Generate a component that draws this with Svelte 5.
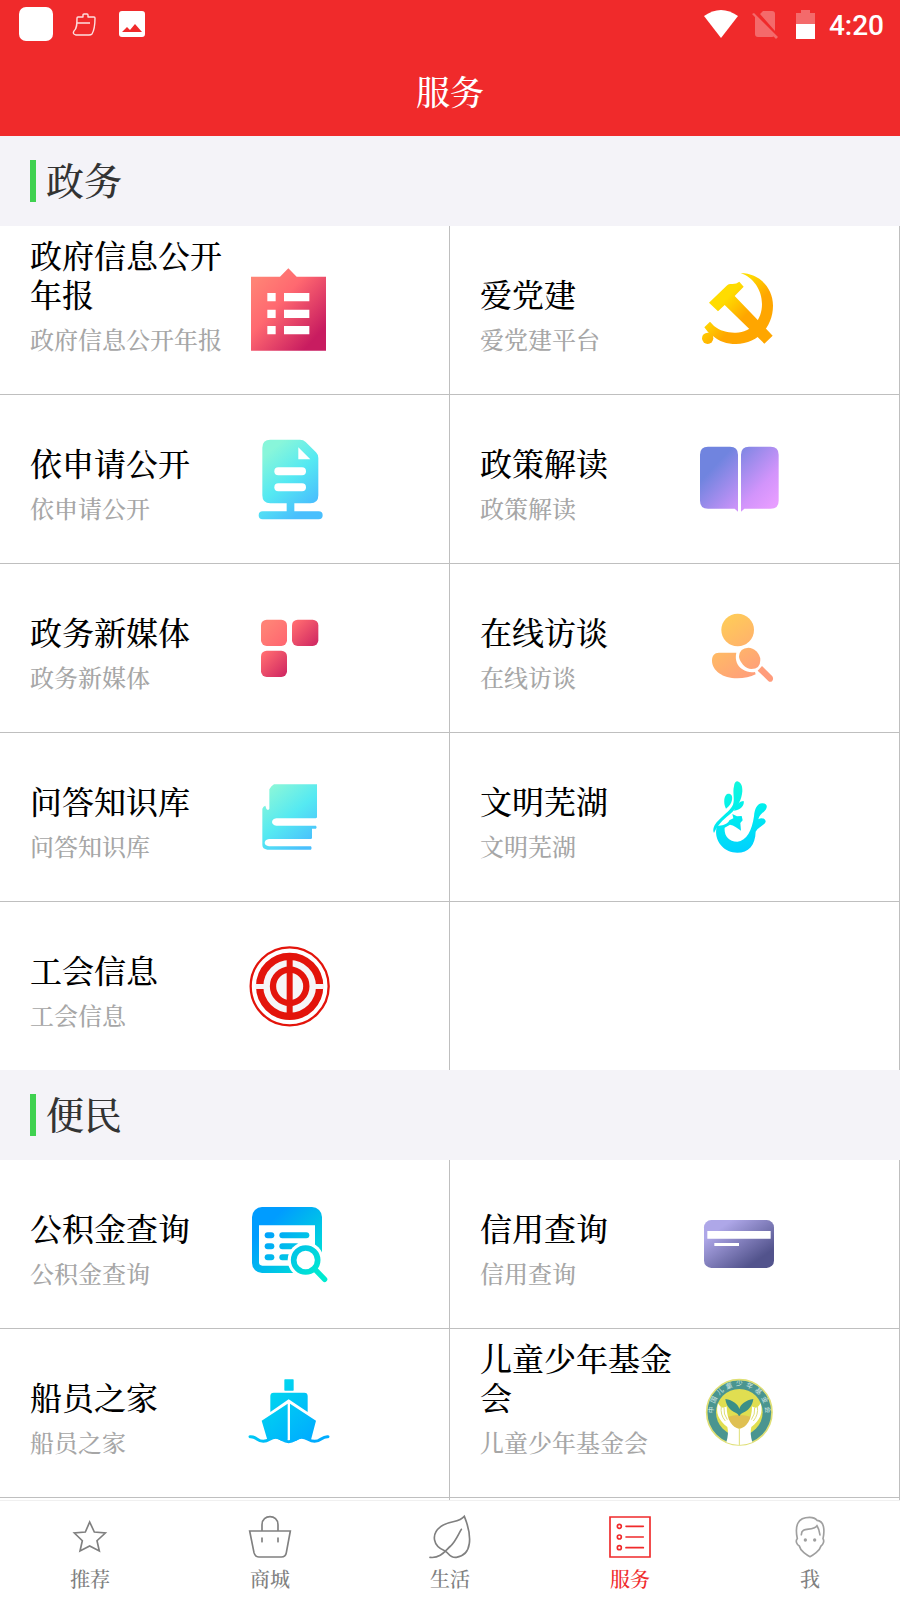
<script lang="ts">
  interface Service {
    title: string;
    desc: string;
    icon: string;
  }

  interface Section {
    name: string;
    items: (Service | null)[];
  }

  const sections: Section[] = [
    {
      name: '政务',
      items: [
        { title: '政府信息公开年报', desc: '政府信息公开年报', icon: 'report' },
        { title: '爱党建', desc: '爱党建平台', icon: 'party' },
        { title: '依申请公开', desc: '依申请公开', icon: 'document' },
        { title: '政策解读', desc: '政策解读', icon: 'book' },
        { title: '政务新媒体', desc: '政务新媒体', icon: 'tiles' },
        { title: '在线访谈', desc: '在线访谈', icon: 'interview' },
        { title: '问答知识库', desc: '问答知识库', icon: 'library' },
        { title: '文明芜湖', desc: '文明芜湖', icon: 'splash' },
        { title: '工会信息', desc: '工会信息', icon: 'union' },
        null,
      ],
    },
    {
      name: '便民',
      items: [
        { title: '公积金查询', desc: '公积金查询', icon: 'fund' },
        { title: '信用查询', desc: '信用查询', icon: 'card' },
        { title: '船员之家', desc: '船员之家', icon: 'ship' },
        { title: '儿童少年基金会', desc: '儿童少年基金会', icon: 'children' },
        null,
        null,
      ],
    },
  ];

  const tabs = [
    { label: '推荐', icon: 'star' },
    { label: '商城', icon: 'bag' },
    { label: '生活', icon: 'leaf' },
    { label: '服务', icon: 'list' },
    { label: '我', icon: 'me' },
  ];

  let activeTab = $state('服务');
</script>

<!-- Gradients shared by the service icons -->
<svg class="defs" aria-hidden="true">
  <defs>
    <linearGradient id="rose" x1="0" y1="0" x2="1" y2="1">
      <stop offset="0.1" stop-color="#ff8375" />
      <stop offset="0.4" stop-color="#ff6870" />
      <stop offset="0.85" stop-color="#c81c60" />
    </linearGradient>
    <linearGradient id="peach" x1="0" y1="0" x2="1" y2="1">
      <stop offset="0.2" stop-color="#ff8276" />
      <stop offset="1" stop-color="#ff6470" />
    </linearGradient>
    <linearGradient id="crimson" x1="0" y1="0" x2="1" y2="1">
      <stop offset="0.1" stop-color="#ff6a70" />
      <stop offset="1" stop-color="#cd2461" />
    </linearGradient>
    <linearGradient id="gold" gradientUnits="userSpaceOnUse" x1="60" y1="60" x2="170" y2="170">
      <stop offset="0.2" stop-color="#ffdc00" />
      <stop offset="0.7" stop-color="#ffa600" />
    </linearGradient>
    <linearGradient id="aqua" gradientUnits="userSpaceOnUse" x1="40" y1="20" x2="200" y2="215">
      <stop offset="0.1" stop-color="#88f6da" />
      <stop offset="0.5" stop-color="#55e9f2" />
      <stop offset="0.9" stop-color="#49bffd" />
    </linearGradient>
    <linearGradient id="violet" gradientUnits="userSpaceOnUse" x1="20" y1="30" x2="210" y2="210">
      <stop offset="0.2" stop-color="#7084df" />
      <stop offset="0.75" stop-color="#d294fb" />
      <stop offset="1" stop-color="#e79dff" />
    </linearGradient>
    <linearGradient id="amber" gradientUnits="userSpaceOnUse" x1="70" y1="30" x2="180" y2="200">
      <stop offset="0" stop-color="#ffcc58" />
      <stop offset="1" stop-color="#ff9c7c" />
    </linearGradient>
    <linearGradient id="water" gradientUnits="userSpaceOnUse" x1="90" y1="15" x2="140" y2="225">
      <stop offset="0" stop-color="#12f8dc" />
      <stop offset="0.4" stop-color="#00f0ec" />
      <stop offset="1" stop-color="#00d0ff" />
    </linearGradient>
    <linearGradient id="query" gradientUnits="userSpaceOnUse" x1="20" y1="40" x2="200" y2="220">
      <stop offset="0.15" stop-color="#009cff" />
      <stop offset="1" stop-color="#00ead0" />
    </linearGradient>
    <linearGradient id="slate" x1="0" y1="0" x2="1" y2="1">
      <stop offset="0.2" stop-color="#aea7e8" />
      <stop offset="0.8" stop-color="#52538c" />
    </linearGradient>
    <linearGradient id="sea" gradientUnits="userSpaceOnUse" x1="50" y1="50" x2="180" y2="200">
      <stop offset="0" stop-color="#00d8ee" />
      <stop offset="1" stop-color="#00acff" />
    </linearGradient>
  </defs>
</svg>

{#snippet serviceIcon(name: string)}
  <svg class="service-icon" viewBox="0 0 240 240" aria-hidden="true">
    {#if name === 'report'}
      <path fill="url(#rose)" d="M3 20H90L115-5L140 20H228V242H3Z" />
      <path fill="#fff" d="M52 69h25v25H52zM102 69h76v25h-76zM52 119h25v25H52zM102 119h76v25h-76zM52 168h25v25H52zM102 168h76v25h-76z" />
    {:else if name === 'party'}
      <g fill="url(#gold)">
        <path d="M27 98L80 47Q85 41 92 42Q108 44 118 35L131 50L104 78L218 197L193 221L74 105L54 124Z" />
        <path d="M122 9C180 10 219 55 219 107C219 172 170 222 108 222C80 222 58 214 38 197L36 202L13 172L30 155L42 168C60 183 85 189 108 188C155 186 186 150 186 102C186 60 160 22 122 9Z" />
        <circle cx="23" cy="205" r="17" />
      </g>
    {:else if name === 'document'}
      <path fill="url(#aqua)" d="M61 2H150Q160 2 167 9L198 40Q205 47 205 57V169Q205 193 181 193H133V217H206A12 12 0 0 1 206 241H38A12 12 0 0 1 38 217H110V193H61Q37 193 37 169V26Q37 2 61 2Z" />
      <path fill="#fff" d="M145 25V61H181Z" />
      <rect fill="#fff" x="73" y="85" width="95" height="24" rx="12" />
      <rect fill="#fff" x="73" y="133" width="95" height="24" rx="12" />
    {:else if name === 'book'}
      <path fill="url(#violet)" d="M24 23H90Q114 23 114 47V218L104 209H24Q0 209 0 185V47Q0 23 24 23ZM147 23H212Q236 23 236 47V185Q236 209 212 209H133L123 218V47Q123 23 147 23Z" />
    {:else if name === 'tiles'}
      <rect fill="url(#peach)" x="33" y="35" width="78" height="79" rx="17" />
      <rect fill="url(#crimson)" x="126" y="35" width="79" height="79" rx="17" />
      <rect fill="url(#crimson)" x="33" y="128" width="78" height="79" rx="17" />
    {:else if name === 'interview'}
      <g fill="url(#amber)">
        <circle cx="113" cy="66" r="49" />
        <path d="M57 134H109C104 156 112 173 126 183C140 193 154 194 165 192L167 199C152 207 132 211 112 211C68 211 36 187 36 158C36 143 43 134 57 134Z" />
        <path d="M145 119Q158 119 169 130Q181 142 181 156Q181 183 154 183Q142 183 129 170Q117 157 117 145Q119 120 145 119Z" />
        <path d="M173 188L186 174L217 205Q222 214 216 220Q210 224 204 218Z" />
      </g>
    {:else if name === 'library'}
      <path fill="url(#aqua)" d="M58 37Q64 26 72 22H201V121Q200 124 197 124H79C62 125 62 145 79 146H198Q202 150 198 155H186V183Q186 186 182 186H57C40 188 40 206 57 208H183Q187 213 183 218H52Q37 216 37 204V95Q40 87 46 86L49 95Q54 102 58 95Z" />
    {:else if name === 'splash'}
      <g fill="url(#water)">
        <path d="M112 13C123 15 128 28 127 43C125 68 114 88 97 105C78 123 55 137 42 168C37 160 41 147 50 136C65 118 91 101 99 83C105 68 97 45 102 28C103 18 107 13 112 13Z" />
        <path d="M85 50C95 50 98 58 96 69C94 80 88 88 78 95C73 86 72 76 73 66C75 56 79 50 85 50Z" />
        <path d="M102 101C106 84 118 73 131 72C134 86 122 98 102 101Z" />
        <path d="M52 146C66 148 86 140 88 130L100 124L97 111L111 118L125 117L128 130L121 138L123 161C111 153 102 144 90 143L74 152C72 175 85 194 112 194C140 192 156 160 162 118C164 95 172 80 186 79C200 78 204 88 197 98C190 108 178 112 175 127C185 120 198 126 197 134C192 146 174 150 167 164C166 205 145 227 112 227C70 227 43 190 49 155Z" />
      </g>
    {:else if name === 'union'}
      <circle cx="119" cy="121" r="117" fill="#fff" stroke="#e3140b" stroke-width="7" />
      <circle cx="119" cy="121" r="101" fill="#f6f5f7" />
      <circle cx="119" cy="121" r="90" fill="none" stroke="#e3140b" stroke-width="22" />
      <path fill="#f6f5f7" d="M16 114H222V129H16Z" />
      <circle cx="119" cy="121" r="50" fill="#f6f5f7" stroke="#e3140b" stroke-width="19" />
      <path fill="#e3140b" d="M110 25H128V217H110Z" />
    {:else if name === 'fund'}
      <g stroke="url(#query)" fill="none" stroke-linecap="round">
        <rect fill="url(#query)" stroke="none" x="6" y="9" width="210" height="198" rx="30" />
        <path fill="#fff" stroke="none" d="M27 64H195V175Q195 185 185 185H37Q27 185 27 175Z" />
        <g fill="url(#query)" stroke="none">
          <rect x="44" y="85" width="29" height="18" rx="9" />
          <rect x="44" y="118" width="29" height="18" rx="9" />
          <rect x="44" y="151" width="29" height="18" rx="9" />
          <rect x="88" y="85" width="90" height="18" rx="9" />
          <rect x="88" y="118" width="60" height="18" rx="9" />
          <rect x="88" y="151" width="40" height="18" rx="9" />
        </g>
        <circle cx="167" cy="168" r="54" fill="#fff" stroke="none" />
        <circle cx="167" cy="168" r="36" stroke-width="17" />
        <path stroke-width="16" d="M195 196L224 226" />
      </g>
    {:else if name === 'card'}
      <rect fill="url(#slate)" x="12" y="48" width="210" height="144" rx="22" />
      <path fill="#fff" d="M22 81H212V104H22ZM43 117H117V126H43Z" />
    {:else if name === 'ship'}
      <g fill="url(#sea)">
        <rect x="103" y="19" width="28" height="34" rx="2" />
        <path d="M71 59H163Q173 59 173 69V117L116 79L61 117V69Q61 59 71 59Z" />
        <path d="M35 143L113 92V200Q100 208 88 200Q74 192 52 200ZM120 92L198 143L183 200Q158 188 144 200Q132 208 120 202Z" />
      </g>
      <path fill="none" stroke="url(#sea)" stroke-width="9" stroke-linecap="round" d="M0 191C18 189 22 205 40 205C58 205 60 193 77 193C94 193 98 206 116 206C134 206 138 193 155 193C172 193 176 205 194 205C212 205 216 189 234 191" />
    {:else if name === 'children'}
      <circle cx="118" cy="118" r="98" fill="#4a9590" stroke="#dfdf75" stroke-width="5" />
      <circle cx="118" cy="118" r="70" fill="#e0de51" />
      <path id="ring" fill="none" d="M43 139A78 78 0 1 1 193 139" />
      <text class="ring-text"><textPath href="#ring" startOffset="50%" text-anchor="middle">中&nbsp;&nbsp;国&nbsp;&nbsp;儿&nbsp;&nbsp;童&nbsp;&nbsp;少&nbsp;&nbsp;年&nbsp;&nbsp;基&nbsp;&nbsp;金&nbsp;&nbsp;会</textPath></text>
      <path fill="#dfc052" d="M82 132Q118 120 155 132C154 154 136 167 118 167C100 167 83 154 82 132Z" />
      <path fill="#fff" d="M54 91C46 119 56 143 82 162Q87 181 79 208Q98 216 118 216V168C97 163 80 142 80 100C66 110 60 100 54 91ZM182 91C190 119 180 143 154 162Q149 181 157 208Q138 216 118 216V168C139 163 156 142 156 100C170 110 176 100 182 91Z" />
      <path fill="none" stroke="#dfdf75" stroke-width="3" d="M64 100Q60 125 76 144M72 104Q70 124 82 140M172 100Q176 125 160 144M164 104Q166 124 154 140M118 166V216" />
      <path fill="#3b8f87" d="M116 128C114 116 82 119 76 78C98 80 116 96 118 108C120 96 138 80 160 78C154 119 122 116 120 128Z" />
    {/if}
  </svg>
{/snippet}

<div class="page">
  <header>
    <div class="status-bar">
      <div class="notifications">
        <svg class="status-large" viewBox="0 0 34 34" aria-hidden="true">
          <rect width="34" height="34" rx="7" fill="#fff" />
        </svg>
        <svg class="status-small" viewBox="0 0 26 26" aria-hidden="true">
          <path fill="none" stroke="#fff" stroke-opacity="0.85" stroke-width="1.4" stroke-linejoin="round" d="M4 7Q4 6 5 6H10V4Q10 3 11 3H14Q15 3 15 4V6H21Q22 6 22 7C22 13 22 18 19 23Q18 24 16 24H3Q-1 23 1 20C4 18 4 13 4 7ZM4 12H17" />
        </svg>
        <svg class="status-small" viewBox="0 0 26 26" aria-hidden="true">
          <path fill="#fff" fill-rule="evenodd" d="M3 0H23Q26 0 26 3V23Q26 26 23 26H3Q0 26 0 23V3Q0 0 3 0ZM3 21H23L16 13L11 19L8 16Z" />
        </svg>
      </div>
      <div class="system">
        <svg class="status-large" viewBox="0 0 34 34" aria-hidden="true">
          <path fill="#fff" d="M0 9Q17-3 34 9L17 31Z" />
        </svg>
        <svg class="status-small" viewBox="0 0 26 26" aria-hidden="true">
          <path fill="#fff" fill-opacity="0.3" d="M8 3L11 0H20Q23 0 23 3V20ZM3 6L22 25Q21 26 20 26H6Q3 26 3 23ZM0 3L2 2L26 26L24 28Z" />
        </svg>
        <svg class="status-battery" viewBox="-4 0 23 29" aria-hidden="true">
          <path fill="#fff" fill-opacity="0.3" d="M0 3H5V0H14V3H19V14H0Z" />
          <path fill="#fff" d="M0 14H19V29H0Z" />
        </svg>
        <time>4:20</time>
      </div>
    </div>
    <h1>服务</h1>
  </header>

  <main>
    {#each sections as section}
      <section>
        <h2><span>{section.name}</span></h2>
        <div class="grid">
          {#each section.items as item}
            {#if item}
              <a class="cell" href="#{item.icon}">
                <span class="text">
                  <span class="title">{item.title}</span>
                  <span class="desc">{item.desc}</span>
                </span>
                {@render serviceIcon(item.icon)}
              </a>
            {:else}
              <div class="cell"></div>
            {/if}
          {/each}
        </div>
      </section>
    {/each}
  </main>

  <nav>
    {#each tabs as tab}
      <button
        class="tab"
        class:active={activeTab === tab.label}
        onclick={() => (activeTab = tab.label)}
      >
        <svg class="tab-icon" viewBox="0 0 126 126" aria-hidden="true">
          {#if tab.icon === 'star'}
            <path d="M62 18L76 48L109 51L84 74L91 105L62 90L33 105L40 74L16 51L49 48Z" />
          {:else if tab.icon === 'bag'}
            <path d="M2 45H124L112 110Q110 123 97 123H30Q18 123 15 110ZM39 45V26C39-6 87-6 87 26V45M39 66V77M87 66V77" />
          {:else if tab.icon === 'leaf'}
            <path d="M106 1C90 22 60 12 35 32C5 55 12 90 47 104C60 110 60 126 82 124C130 118 130 60 106 1ZM3 124C36 128 50 102 65 90C80 76 88 55 97 40" />
          {:else if tab.icon === 'list'}
            <path d="M3 3H123V123H3ZM51 31H103M51 63H103M51 95H103" />
            <circle cx="31" cy="31" r="6" />
            <circle cx="31" cy="63" r="6" />
            <circle cx="31" cy="95" r="6" />
          {:else if tab.icon === 'me'}
            <g opacity="0.75">
              <path d="M25 68C17 30 25 4 62 4C75 4 80 8 84 13C107 15 107 45 102 68C107 75 102 86 96 90C92 105 72 118 63 122C54 118 34 105 31 90C24 86 18 75 25 68ZM37 56C37 30 70 48 84 29C90 38 92 50 93 57" />
              <circle class="dot" cx="49" cy="72" r="5" />
              <circle class="dot" cx="77" cy="72" r="5" />
            </g>
          {/if}
        </svg>
        <span>{tab.label}</span>
      </button>
    {/each}
  </nav>
</div>

<style>
  :global(body) {
    margin: 0;
    background: #fff;
  }

  .defs {
    position: absolute;
    width: 0;
    height: 0;
  }

  .page {
    display: flex;
    flex-direction: column;
    height: 100vh;
    font-family: "Noto Serif CJK SC", "Noto Serif SC", "Source Han Serif SC", serif;
    font-weight: 500;
    color: #000;
  }

  header {
    flex: none;
    background: #f02a2b;
    color: #fff;
  }

  .status-bar {
    display: flex;
    justify-content: space-between;
    height: 48px;
    padding: 0 16px 0 19px;
  }

  .notifications,
  .system {
    display: flex;
    align-items: center;
    gap: 20px;
  }

  .system {
    gap: 14px;
  }

  .status-bar svg {
    flex: none;
    overflow: visible;
  }

  .status-large {
    width: 34px;
    height: 34px;
  }

  .status-small {
    width: 26px;
    height: 26px;
  }

  .status-battery {
    width: 23px;
    height: 29px;
  }

  time {
    padding-top: 3px;
    font: 500 28px/32px Roboto, sans-serif;
  }

  h1 {
    margin: 0;
    padding-bottom: 2px;
    font-size: 34px;
    font-weight: inherit;
    line-height: 86px;
    text-align: center;
  }

  main {
    flex: 1;
    min-height: 0;
    overflow-y: auto;
    scrollbar-width: none;
  }

  h2 {
    margin: 0;
    padding: 24px 30px;
    background: #f4f3f8;
    color: #333;
    font-size: 38px;
    font-weight: inherit;
    line-height: 38px;
  }

  h2 span {
    display: block;
    padding: 0 0 4px 10px;
    border-left: 6px solid #3fd150;
  }

  .grid {
    display: grid;
    grid-template-columns: 1fr 1fr;
  }

  .cell {
    display: flex;
    align-items: center;
    gap: 28px;
    box-sizing: border-box;
    height: 169px;
    padding-left: 30px;
    border-right: 1px solid #bfbfbf;
    border-bottom: 1px solid #bfbfbf;
    color: inherit;
    text-decoration: none;
  }

  .cell:nth-last-child(-n + 2) {
    height: 168px;
    border-bottom: none;
  }

  .text {
    display: flex;
    flex-direction: column;
    justify-content: flex-end;
    gap: 11px;
    width: 192px;
    height: 116px;
    padding-bottom: 28px;
  }

  .title {
    font-size: 32px;
    line-height: 39px;
  }

  .desc {
    color: #a6a6a6;
    font-size: 24px;
    line-height: 30px;
    white-space: nowrap;
  }

  .service-icon {
    flex: none;
    width: 80px;
    height: 80px;
    overflow: visible;
  }

  .ring-text {
    fill: #d5e8e6;
    font: 20px "Noto Sans CJK SC", sans-serif;
  }

  nav {
    display: grid;
    grid-template-columns: repeat(5, 1fr);
    flex: none;
    box-sizing: border-box;
    height: 100px;
    border-top: 1px solid #f0f0f0;
    background: #fff;
  }

  .tab {
    display: flex;
    flex-direction: column;
    align-items: center;
    gap: 8px;
    padding: 15px 0 0;
    border: none;
    background: none;
    color: #808080;
    font-family: inherit;
    font-size: 20px;
    font-weight: inherit;
    line-height: 26px;
    cursor: pointer;
  }

  .tab.active {
    color: #f02a2b;
  }

  .tab-icon {
    width: 42px;
    height: 42px;
    overflow: visible;
    fill: none;
    stroke: currentColor;
    stroke-width: 5;
    stroke-linecap: round;
  }

  .tab-icon .dot {
    fill: currentColor;
    stroke: none;
  }
</style>
